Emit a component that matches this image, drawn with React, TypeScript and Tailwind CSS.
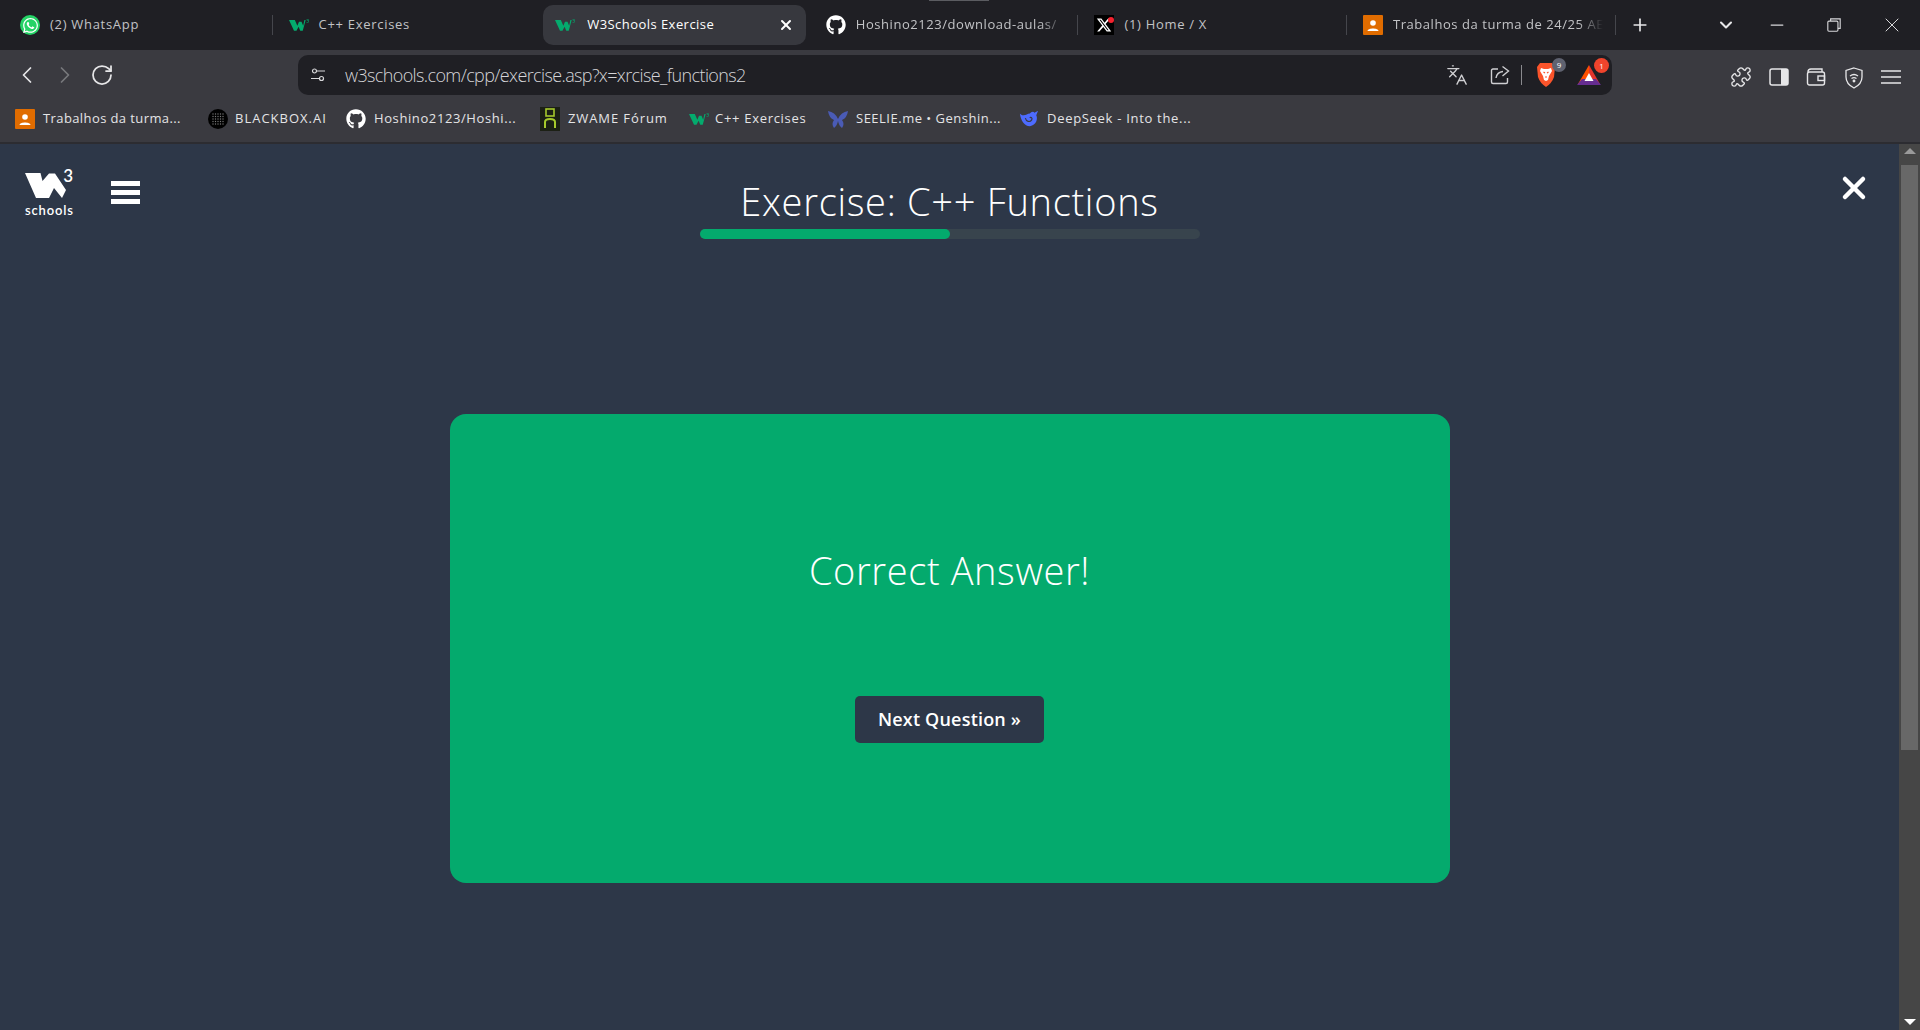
import { ChevronDown, ChevronLeft, ChevronRight, Languages, Minus, Plus, Puzzle, RotateCw, X } from 'lucide-react'
import { FaGithub, FaWhatsapp } from 'react-icons/fa'
import { FaXTwitter } from 'react-icons/fa6'
import type { ReactNode } from 'react'

const W_PATH = 'M0 0 H15.5 L17.5 8 L24 0.5 H30 L41 17 L37 25 L29 15 L24 25 H11 Z'

function W3Icon({ className = 'w-5 h-4 text-[#04aa6d]' }: { className?: string }) {
  return (
    <svg viewBox="0 0 24 16" className={className} fill="currentColor">
      <path d="M0 2 H7 L10 9 L12 4 H15 L17 9 L18.5 2 H20 L16.5 15 H13.5 L11.5 10 L9 15 H6 Z" />
      <path d="M21 1 H23.5 V5 H21 V4.4 H22.8 V3.3 H21.4 V2.7 H22.8 V1.6 H21 Z" />
    </svg>
  )
}

function WhatsAppIcon() {
  return (
    <span className="flex w-5 h-5 items-center justify-center rounded-full bg-[#25d366]">
      <FaWhatsapp className="w-[17px] h-[17px] text-white" />
    </span>
  )
}

function ClassroomIcon() {
  return (
    <svg viewBox="0 0 20 20" className="w-5 h-5 shrink-0">
      <rect width="20" height="20" rx="1" fill="#e06c00" />
      <circle cx="10" cy="8" r="2.8" fill="#fff" />
      <path d="M4.5 16 C4.5 12.5 15.5 12.5 15.5 16 Z" fill="#fff" />
    </svg>
  )
}

function XTabIcon() {
  return (
    <span className="relative flex w-5 h-5 shrink-0 items-center justify-center bg-black">
      <FaXTwitter className="w-4 h-4 text-white" />
      <span className="absolute right-0 top-0.5 w-1.5 h-1.5 rounded-full bg-[#f4212e]" />
    </span>
  )
}

function BlackboxIcon() {
  return (
    <svg viewBox="0 0 20 20" className="w-5 h-5 shrink-0">
      <circle cx="10" cy="10" r="10" fill="#000" />
      {[5, 7.5, 10, 12.5, 15].map((x) =>
        [5, 7.5, 10, 12.5, 15].map((y) => <circle key={`${x}-${y}`} cx={x} cy={y} r="0.7" fill="#777" />),
      )}
    </svg>
  )
}

function ZwameIcon() {
  return (
    <svg viewBox="0 0 20 24" className="w-5 h-6 shrink-0">
      <rect width="20" height="24" fill="#1c2015" />
      <rect x="6" y="2" width="8" height="7" fill="none" stroke="#a6c92c" strokeWidth="1.6" />
      <path d="M5 21 V15 Q5 12 10 12 Q15 12 15 15 V21" fill="none" stroke="#a6c92c" strokeWidth="2" />
    </svg>
  )
}

function SeelieIcon() {
  return (
    <svg viewBox="0 0 20 20" className="w-5 h-5 shrink-0" fill="#4a5bb5">
      <path d="M0 2 Q7 3 10 10 Q13 3 20 2 Q19 9 14 11 Q17 15 14 19 Q11 17 10 12 Q9 17 6 19 Q3 15 6 11 Q1 9 0 2 Z" />
    </svg>
  )
}

function DeepSeekIcon() {
  return (
    <svg viewBox="0 0 22 20" className="w-5 h-5 shrink-0">
      <path d="M1 4 C2 5 3 6 5 6 C8 6 9 4 12 4 C13 2 16 1 17 3 L21 1 L19 6 C21 10 19 17 12 18 C6 18 2 12 1 4 Z" fill="#4d6bfe" />
      <path d="M7 9 C8 13 12 14 14 11 C15 9 13 7 12 9" fill="none" stroke="#3a3a40" strokeWidth="1.3" />
    </svg>
  )
}

function BraveIcon() {
  return (
    <svg viewBox="0 0 20 26" className="w-5 h-[26px]">
      <path d="M4 1 H16 L19 5 L18 15 Q16 21 10 25 Q4 21 2 15 L1 5 Z" fill="#fb542b" />
      <path d="M5 6 L8 7 H12 L15 6 L16 9 L13 14 L12 18 L10 19 L8 18 L7 14 L4 9 Z" fill="#fff" />
      <path d="M7.5 10 L9 11 M12.5 10 L11 11 M9 15 H11" stroke="#fb542b" strokeWidth="1.2" />
    </svg>
  )
}

function BatIcon() {
  return (
    <svg viewBox="0 0 24 22" className="w-6 h-[22px]">
      <path d="M12 1 L1 20 H12 Z" fill="#ff5000" />
      <path d="M12 1 L23 20 H12 Z" fill="#e2342d" />
      <path d="M0 21 L5 15 H19 L24 21 Z" fill="#662d91" />
      <path d="M12 9 L7.5 17 H16.5 Z" fill="#fff" />
    </svg>
  )
}

function Separator({ hidden = false }: { hidden?: boolean }) {
  return <span className={hidden ? 'w-px h-5 shrink-0' : 'w-px h-5 shrink-0 bg-[#45464c]'} />
}

function Tab({ icon, title, active = false, sep = false, fade = false }: { icon: ReactNode; title: string; active?: boolean; sep?: boolean; fade?: boolean }) {
  return (
    <div className="flex w-[268.6px] shrink-0 items-center">
      <div className={active ? 'flex h-10 flex-1 items-center gap-3 rounded-[10px] bg-[#37383e] ml-[2px] mr-[3px] pl-3 pr-3' : 'flex h-10 min-w-0 flex-1 items-center gap-2.5 pl-4 pr-3'}>
        <span className="flex w-5 shrink-0 justify-center">{icon}</span>
        {active ? (
          <span className="flex-1 truncate text-[13px] tracking-[0.45px] text-white">{title}</span>
        ) : (
          <span className={fade ? 'flex-1 overflow-hidden whitespace-nowrap text-[13px] tracking-[0.55px] text-[#c2c3c6] [mask-image:linear-gradient(to_right,black_88%,transparent)]' : 'flex-1 whitespace-nowrap text-[13px] tracking-[0.7px] text-[#c2c3c6]'}>{title}</span>
        )}
        {active && <X className="w-4 h-4 text-white" strokeWidth={3} />}
      </div>
      <Separator hidden={!sep} />
    </div>
  )
}

function Bookmark({ icon, label, className }: { icon: ReactNode; label: string; className: string }) {
  return (
    <div className={`flex items-center whitespace-nowrap text-[13px] tracking-[0.4px] text-[#e4e4e6] ${className}`}>
      {icon}
      <span>{label}</span>
    </div>
  )
}

export default function App() {
  return (
    <div className="flex h-[1030px] w-full flex-col overflow-hidden bg-[#2d3748] font-['Open_Sans','Noto_Sans',sans-serif]">
      {/* tab strip */}
      <div className="relative flex h-[50px] shrink-0 items-center bg-[#1f1f24] pl-1">
        <span className="absolute left-[929px] top-0 h-px w-[60px] bg-[#5b5c61]" />
        <Tab icon={<WhatsAppIcon />} title="(2) WhatsApp" sep />
        <Tab icon={<W3Icon />} title="C++ Exercises" />
        <Tab icon={<W3Icon />} title="W3Schools Exercise" active />
        <Tab icon={<FaGithub className="w-5 h-5 text-white" />} title="Hoshino2123/download-aulas/" sep fade />
        <Tab icon={<XTabIcon />} title="(1) Home / X" sep />
        <Tab icon={<ClassroomIcon />} title="Trabalhos da turma de 24/25 AE" sep fade />
        <Plus className="ml-[14px] w-5 h-5 text-[#e6e6e8]" strokeWidth={2} />
        <ChevronDown className="ml-[66px] w-5 h-5 text-[#e6e6e8]" strokeWidth={2.5} />
        <Minus className="ml-[31px] w-5 h-5 text-[#d8d8da]" strokeWidth={1.5} />
        <svg viewBox="0 0 16 16" className="ml-[38px] w-[18px] h-[18px] text-[#d8d8da]" fill="none" stroke="currentColor">
          <rect x="2.5" y="4.5" width="9" height="9" rx="1" />
          <path d="M5 4.5 V2.5 H13.5 V11 H11.5" />
        </svg>
        <X className="ml-[37px] w-6 h-6 text-[#d8d8da]" strokeWidth={1} />
      </div>

      {/* toolbar */}
      <div className="flex h-[45px] shrink-0 items-end bg-[#3a3a40]">
        <ChevronLeft className="ml-[13px] mb-[6px] w-7 h-7 text-[#e6e6e8]" strokeWidth={1.5} />
        <ChevronRight className="ml-[10px] mb-[6px] w-7 h-7 text-[#77787c]" strokeWidth={1.5} />
        <RotateCw className="ml-[11px] mb-2 w-6 h-6 text-[#e6e6e8]" strokeWidth={1.75} />
        <div className="ml-[184px] flex h-10 w-[1314px] items-center rounded-[10px] bg-[#1f1f24] pl-[12px] pr-[3px]">
          <svg viewBox="0 0 16 16" className="w-4 h-4 text-[#d8d8da]" fill="none" stroke="currentColor" strokeWidth="1.2">
            <circle cx="4.5" cy="4" r="2" />
            <path d="M7 4 H15 M1 11.5 H9" />
            <circle cx="11.5" cy="11.5" r="2" />
          </svg>
          <span className="ml-[19px] flex-1 text-[18px] tracking-[-0.62px] text-[#d5d5d8] font-light">w3schools.com/cpp/exercise.asp?x=xrcise_functions2</span>
          <Languages className="w-[22px] h-[22px] text-[#cfcfd2]" strokeWidth={1.5} />
          <svg viewBox="0 0 20 20" className="ml-[22px] w-5 h-5 text-[#cfcfd2]" fill="none" stroke="currentColor" strokeWidth="1.4">
            <path d="M8 4 H3 Q1.5 4 1.5 5.5 V17 Q1.5 18.5 3 18.5 H16 Q17.5 18.5 17.5 17 V13" />
            <path d="M6 13 Q7 7 13 6.5 M12.5 1.5 L18.5 6 L12.5 11" />
          </svg>
          <span className="ml-[11px] w-px h-5 bg-[#8a8a8e]" />
          <span className="relative ml-3 flex w-6 justify-center">
            <BraveIcon />
            <span className="absolute -right-2 -top-1 flex w-3.5 h-3.5 items-center justify-center rounded-full bg-[#5f6270] text-[8px] text-white">9</span>
          </span>
          <span className="relative ml-[19px] flex">
            <BatIcon />
            <span className="absolute -right-2 -top-1.5 flex w-[15px] h-[15px] items-center justify-center rounded-full bg-[#f0442c] text-[8px] text-white">1</span>
          </span>
          <span className="w-2" />
        </div>
        <Puzzle className="ml-[118px] mb-[7px] w-[22px] h-[22px] text-[#e6e6e8]" strokeWidth={1.5} />
        <svg viewBox="0 0 20 20" className="ml-[17px] mb-2 w-5 h-5 text-[#e6e6e8]">
          <rect x="1" y="2" width="18" height="16" rx="2" fill="none" stroke="currentColor" strokeWidth="1.5" />
          <rect x="12" y="2" width="7" height="16" fill="currentColor" />
        </svg>
        <svg viewBox="0 0 20 20" className="ml-[17px] mb-2 w-5 h-5 text-[#e6e6e8]" fill="none" stroke="currentColor" strokeWidth="1.4">
          <path d="M2 5 Q2 2 5 2 H16 V5" />
          <rect x="1.5" y="5" width="17" height="13" rx="2" />
          <rect x="12" y="9" width="6.5" height="4.5" />
        </svg>
        <svg viewBox="0 0 20 22" className="ml-[18px] mb-[6px] w-5 h-[22px] text-[#e6e6e8]" fill="none" stroke="currentColor" strokeWidth="1.3">
          <path d="M10 1 L18 3.5 V10 Q18 17 10 21 Q2 17 2 10 V3.5 Z" />
          <path d="M6 9 Q10 6 14 9 M7.5 11.5 Q10 9.8 12.5 11.5" />
          <circle cx="10" cy="14" r="0.8" fill="currentColor" />
        </svg>
        <svg viewBox="0 0 20 16" className="ml-[17px] mb-[10px] w-5 h-4 text-[#e6e6e8]" stroke="currentColor" strokeWidth="1.5">
          <path d="M0 2 H20 M0 8 H20 M0 14 H20" />
        </svg>
      </div>

      {/* bookmarks */}
      <div className="flex h-[47px] shrink-0 items-center bg-[#3a3a40] pl-[15px]">
        <Bookmark icon={<ClassroomIcon />} label="Trabalhos da turma..." className="w-[193px] gap-2" />
        <Bookmark icon={<BlackboxIcon />} label="BLACKBOX.AI" className="w-[138px] gap-[7px] tracking-[1px]" />
        <Bookmark icon={<FaGithub className="w-5 h-5 text-white" />} label="Hoshino2123/Hoshi..." className="w-[194px] gap-2 tracking-[0.6px]" />
        <Bookmark icon={<ZwameIcon />} label="ZWAME Fórum" className="w-[149px] gap-2 tracking-[0.9px]" />
        <Bookmark icon={<W3Icon />} label="C++ Exercises" className="w-[139px] gap-1.5 tracking-[0.7px]" />
        <Bookmark icon={<SeelieIcon />} label="SEELIE.me • Genshin..." className="w-[191px] gap-2 tracking-[0.5px]" />
        <Bookmark icon={<DeepSeekIcon />} label="DeepSeek - Into the..." className="w-[180px] gap-2 tracking-[0.7px]" />
      </div>
      <div className="h-[2px] shrink-0 bg-[#2c2c31]" />

      {/* page */}
      <div className="flex min-h-0 flex-1">
        <div className="flex min-w-0 flex-1 flex-col">
          <div className="grid grid-cols-[1fr_500px_1fr] items-start">
            <div className="flex items-start pl-[25px] pt-[26px]">
              <div className="flex w-[48px] flex-col text-white">
                <div className="relative h-[33px]">
                  <svg viewBox="0 0 41 25" className="absolute left-0 top-[3px] w-[41px] h-[25px]" fill="currentColor">
                    <path d={W_PATH} />
                  </svg>
                  <span className="absolute right-0 -top-[2px] text-[17px] leading-4 font-['Lato',sans-serif] font-semibold">3</span>
                </div>
                <span className="text-[13px] leading-[14px] tracking-[0.85px] font-semibold font-['Lato',sans-serif] whitespace-nowrap">schools</span>
              </div>
              <div className="ml-[38px] mt-[11px] flex flex-col gap-1 w-[29px]">
                <span className="h-[5px] bg-white" />
                <span className="h-[5px] bg-white" />
                <span className="h-[5px] bg-white" />
              </div>
            </div>
            <div className="flex flex-col items-center pt-[30px]">
              <h1 className="text-[38px] leading-[54px] tracking-[0.7px] font-light text-white whitespace-nowrap">Exercise: C++ Functions</h1>
              <div className="mt-[1px] h-2.5 w-full rounded-full bg-[#38444d]">
                <div className="h-full w-1/2 rounded-full bg-[#04aa6d]" />
              </div>
            </div>
            <div className="flex justify-end pr-[27px] pt-[26px]">
              <X className="w-9 h-9 text-white" strokeWidth={3} />
            </div>
          </div>

          <div className="mx-auto mt-[175px] flex h-[469px] w-[1000px] flex-col items-center rounded-2xl bg-[#04aa6d] text-white">
            <p className="mt-[128px] text-[38px] leading-[56px] tracking-[0.6px] font-light">Correct Answer!</p>
            <button className="mt-[98px] flex h-[47px] w-[189px] items-center justify-center rounded-[5px] bg-[#2d3748] text-[18px] tracking-[0.2px] font-semibold text-white">Next Question »</button>
          </div>
        </div>

        {/* scrollbar */}
        <div className="flex w-[21px] shrink-0 flex-col items-center bg-[#464646] pb-[5px] pt-1">
          <span className="h-0 w-0 border-x-[6px] border-b-[6px] border-x-transparent border-b-[#9a9a9a]" />
          <span className="mt-[11px] h-[585px] w-[17px] bg-[#686868]" />
          <span className="flex-1" />
          <span className="h-0 w-0 border-x-[6px] border-t-[6px] border-x-transparent border-t-white" />
        </div>
      </div>
    </div>
  )
}
